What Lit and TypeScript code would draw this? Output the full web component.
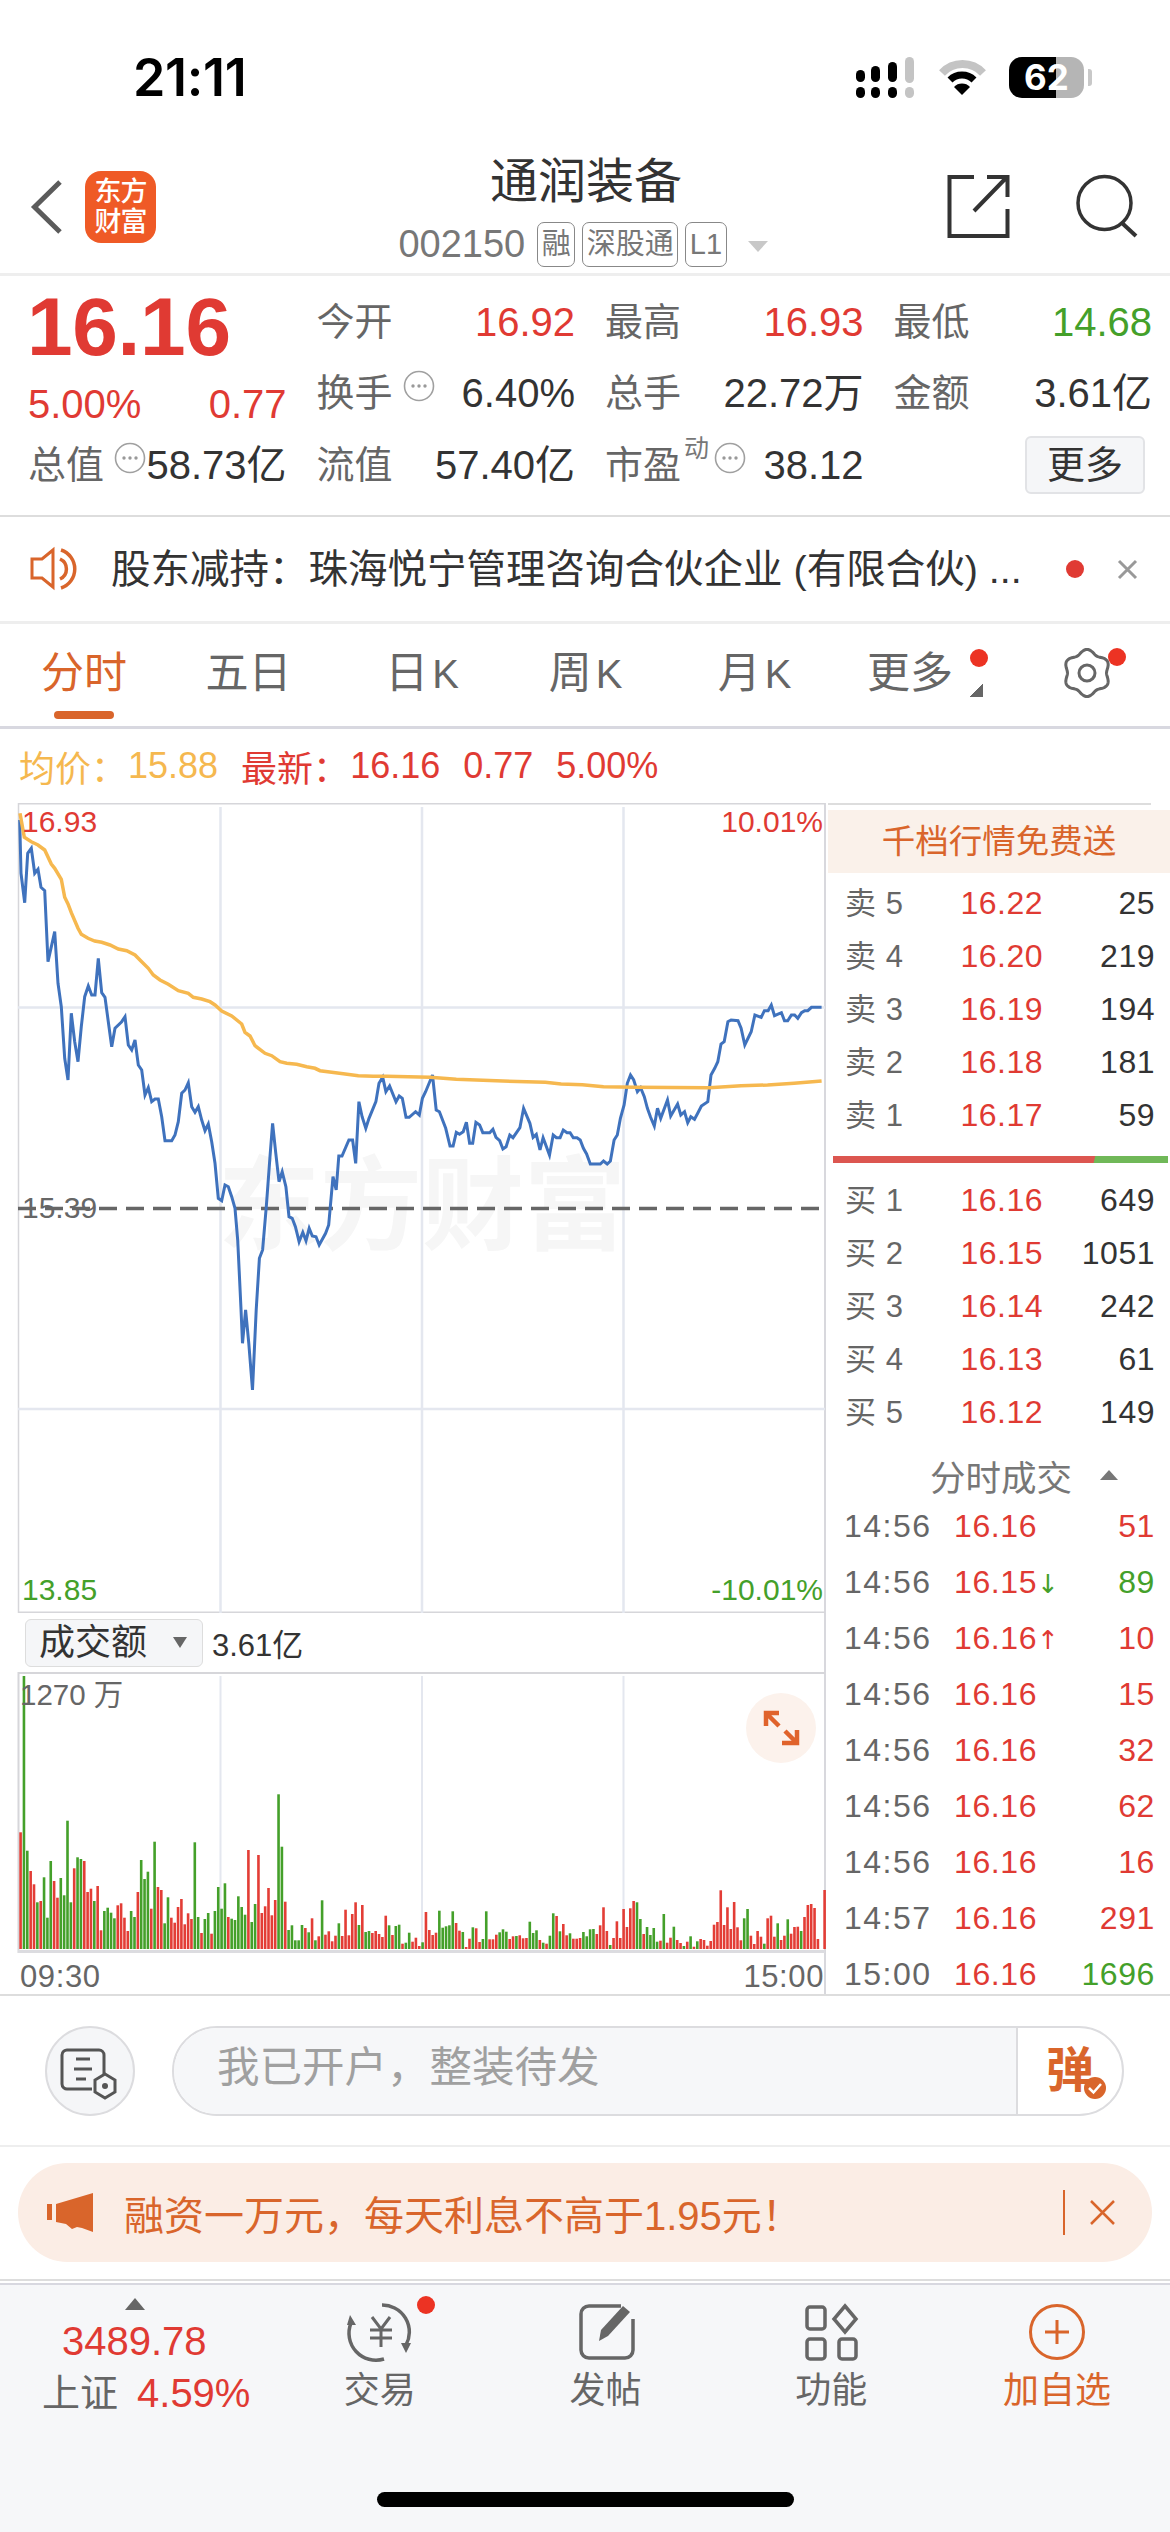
import { LitElement, html, css, svg } from "lit";
import { customElement } from "lit/decorators.js";

const VOL = "R667 G198 G722 R783 R823 G877 R873 G802 G923 G753 R813 R863 G804 G856 G632 G877 R775 G742 G747 R753 R846 R836 G873 R828 R961 G903 G893 G908 G925 R886 R880 R923 R963 G903 G921 R846 G750 G807 G785 R896 G695 R831 R840 G940 G862 R923 R938 R891 R867 R943 R910 R927 G697 G921 R969 G927 G909 R971 G903 G831 G896 G820 R921 G926 G930 G859 G891 G914 R720 G936 G882 R735 R909 R889 R834 R916 R870 G553 G710 R875 G960 G946 G991 G991 G945 R954 G967 R925 G991 R979 G871 R974 R964 R994 R977 G940 R978 R899 R976 R912 R877 G945 R885 G966 G963 R969 R963 R972 R981 R917 G946 R975 G948 G944 R1001 G998 G968 R995 R983 R1008 G997 R906 R960 R975 R968 G902 G953 G949 G946 G904 R939 R962 G966 R1011 R986 G952 R955 R996 G987 G904 R988 R988 R974 G967 G958 G965 R987 R979 G978 R976 R985 R984 G935 G969 G961 R990 G998 R1001 G977 G910 R918 G964 R942 R976 G970 R986 R986 R984 G966 G979 G958 G957 R972 R946 R892 R963 G1005 R984 R934 R984 R897 R951 R895 R873 G877 G927 R972 G951 G975 G954 G995 R992 G912 R998 R983 G950 R990 R999 G1008 R995 G979 R1010 G994 R987 R990 R1007 R993 R944 R936 R841 R945 R892 R957 R876 R952 R991 G925 G897 R977 R1002 R963 R980 G1001 R925 R917 R980 G940 R990 R977 G928 R971 R951 R950 G963 R921 R885 R882 R894 R987 R1017 R840".split(" ");

const B1 = [29,60,33,220,44,308,53,160,64,145,74,220,84,208,93,262,104,272,114,485,134,395,144,550,154,620,164,775,174,840,184,640,194,725,204,785,214,680,224,590,235,558,245,585,255,585,265,475,275,578,285,592,295,665,305,740,315,685,335,665,345,650,355,735,365,750,375,720,385,795,395,810,405,885,415,863,425,905,435,897,445,897,455,950,465,1022,485,1022,495,1005,505,965,515,880,525,870,535,848,545,920,555,937,565,920,575,960,585,992,595,972,605,1025,615,1090,625,1195,635,1202,645,1155,655,1160,665,1190,675,1225];
const B2 = [449,720,455,920,458,1030,464,930,470,1030,477,1170,484,930,490,775,496,750,503,620,510,470,515,370,521,460,527,545,533,515,540,560,546,650,552,655,558,680,565,725,572,697,578,722,584,685,590,708,597,710,603,735,615,700,621,675,629,530,635,570,640,468,646,468,659,420,666,420,672,490,678,305,684,350,691,385,697,355,710,305,716,250,723,232,729,275,736,258,748,305,754,288,760,295,767,352,773,352,785,335,792,345,798,295,804,275,817,225,824,330,830,335,842,385,850,438,856,438,862,397,868,403,875,395,881,367,887,430,893,430,899,367,906,375,912,398,925,398,931,388,937,412,944,422,950,447,956,440,963,405,969,413,982,383,989,325,1001,370,1007,412,1013,403,1020,450,1026,413,1038,465,1045,405,1051,413,1058,413,1064,390,1071,398,1077,398,1083,413,1090,413,1096,420,1102,445,1108,462,1115,492,1134,492,1140,483,1147,492,1153,483,1160,420,1166,405,1172,355,1179,315,1185,250,1191,225,1197,240,1204,275,1210,263,1217,290,1223,325,1229,352,1236,378,1242,325,1248,355,1261,300,1267,348,1280,312,1286,345,1293,335,1299,368,1305,350,1312,358,1318,340,1325,318,1337,305,1343,225,1350,205,1356,185,1362,132,1368,125,1375,65,1381,60,1394,62,1400,85,1407,135,1419,95,1426,45,1438,52,1444,32,1451,32,1457,15,1463,47,1476,38,1482,62,1488,62,1495,45,1501,45,1507,55,1514,38,1520,32,1526,32,1533,22,1552,22];
const Y1 = [30,40,43,112,64,125,84,135,104,150,124,192,134,205,154,238,164,292,174,312,184,338,204,385,214,403,234,415,254,423,275,427,300,435,325,447,350,452,375,465,395,485,415,505,430,525,450,540,475,553,505,572,535,580,550,592,575,597,600,605,615,615,635,633,665,648,695,672,705,697,720,708,735,737,765,760,785,767,810,785,830,790,860,793,890,800,915,805,930,812,965,817,1000,821,1045,827,1090,829,1130,829,1260,832];
const Y2 = [862,238,950,243,1030,247,1060,252,1100,254,1140,260,1200,262,1340,263,1400,257,1450,255,1500,250,1552,243];

function pts(a: number[], fx: (n: number) => number, fy: (n: number) => number) {
  const out: string[] = [];
  for (let i = 0; i < a.length; i += 2) out.push(`${fx(a[i]).toFixed(1)},${fy(a[i + 1]).toFixed(1)}`);
  return out.join(" ");
}
const z7x = (n: number) => 10 + n / 3, z7y = (n: number) => 800 + n / 3;
const z3x = (n: number) => n / 1.889, z3y = (n: number) => 1000 + n / 3;
const BLUE = pts(B1, z7x, z7y) + " " + pts(B2, z3x, z3y);
const GOLD = pts(Y1, z7x, z7y) + " " + pts(Y2, z3x, z3y);

function gearPath(cx: number, cy: number) {
  const p: string[] = [];
  for (let i = 0; i <= 120; i++) {
    const t = (i / 120) * Math.PI * 2;
    const r = 21.5 + 2 * Math.cos(6 * t + Math.PI);
    p.push(`${(cx + r * Math.cos(t)).toFixed(1)} ${(cy + r * Math.sin(t)).toFixed(1)}`);
  }
  return "M" + p.join("L") + "Z";
}

const SELL = [["5","16.22","25"],["4","16.20","219"],["3","16.19","194"],["2","16.18","181"],["1","16.17","59"]];
const BUY = [["1","16.16","649"],["2","16.15","1051"],["3","16.14","242"],["4","16.13","61"],["5","16.12","149"]];
const TRADES: [string,string,string,string,string][] = [
  ["14:56","16.16","","51","r"],["14:56","16.15","d","89","g"],["14:56","16.16","u","10","r"],
  ["14:56","16.16","","15","r"],["14:56","16.16","","32","r"],["14:56","16.16","","62","r"],
  ["14:56","16.16","","16","r"],["14:57","16.16","","291","r"],["15:00","16.16","","1696","g"],
];

const dots = html`<svg class="dots" viewBox="0 0 32 32"><circle cx="16" cy="16" r="14.5" fill="none" stroke="#a0a0a0" stroke-width="1.6"/><circle cx="10" cy="16" r="1.7" fill="#999"/><circle cx="16" cy="16" r="1.7" fill="#999"/><circle cx="22" cy="16" r="1.7" fill="#999"/></svg>`;

@customElement("app-root")
export class AppRoot extends LitElement {
  static styles = css`
    :host { display:block; width:1170px; height:2532px; background:#fff; overflow:hidden; font-family:"Liberation Sans","Noto Sans CJK SC",sans-serif; color:#333; }
    * { box-sizing:border-box; }
    svg { display:block; overflow:visible; }
    .r { color:#e03a33; } .g { color:#44a02a; } .k { color:#333; } .l { color:#666; }

    .status { height:140px; display:flex; justify-content:space-between; align-items:flex-start; padding:0 78px 0 133px; }
    .time { font:600 52px/50px Inter,sans-serif; color:#000; margin-top:53px; letter-spacing:-.3px; }
    .sbar { display:flex; align-items:flex-start; margin-top:57px; }
    .wifi { margin-left:22px; }
    .batt { width:75px; height:41px; border-radius:13px; margin-left:21px; background:linear-gradient(90deg,#000 0 47px,#b5b5b5 47px); color:#fff; font:700 35px/41px Inter,sans-serif; text-align:center; }
    .nub { width:4px; height:17px; margin:12px 0 0 4px; background:#c8c8c8; border-radius:0 3px 3px 0; }

    .nav { height:136px; border-bottom:3px solid #eee; display:grid; grid-template-columns:1fr auto 1fr; align-items:center; padding:0 31px 0 33px; }
    .nl { display:flex; align-items:center; gap:24px; }
    .logo { width:71px; height:72px; border-radius:16px; background:#ef5a26; color:#fff; font-weight:500; font-size:27px; line-height:30px; text-align:center; padding-top:6px; letter-spacing:-1px; }
    .nc { display:flex; flex-direction:column; align-items:center; }
    .title { font-size:48px; line-height:60px; color:#333; margin-top:6px; }
    .sub { display:flex; align-items:center; height:45px; margin-top:10px; padding-right:6px; gap:7px; color:#777; }
    .code { font-size:38px; margin-right:5px; }
    .tag { font-size:29px; height:45px; line-height:42px; border:1.5px solid #888; border-radius:7px; padding:0 3.5px; color:#777; }
    .tri { width:0; height:0; border-left:10px solid transparent; border-right:10px solid transparent; border-top:11px solid #c8c8c8; margin:4px 0 0 14px; }
    .nr { display:flex; justify-content:flex-end; gap:66px; }

    .quote { height:241px; border-bottom:2px solid #ddd; padding:10px 18px 0 28px; display:grid; grid-template-columns:repeat(4,258.5px); column-gap:30px; grid-auto-rows:71.5px; font-size:40px; }
    .left { grid-row:1 / 3; }
    .big { font-size:82px; line-height:82px; font-weight:700; color:#e03a33; margin-left:-1px; letter-spacing:-.3px; }
    .pct { display:flex; justify-content:space-between; line-height:49px; margin-top:12px; color:#e03a33; }
    .stat { display:flex; align-items:center; line-height:50px; white-space:nowrap; }
    .lab { font-size:38px; color:#666; }
    .val { margin-left:auto; }
    .dots { width:32px; height:32px; margin:-14px 0 0 10px; flex:none; }
    .sup { font-size:25px; color:#777; margin:-34px 0 0 3px; line-height:30px; }
    .sup + .dots { margin-left:5px; }
    .btn { margin-left:auto; margin-right:7px; width:120px; height:58px; background:#f5f6f8; border:2px solid #e2e3e6; border-radius:6px; font-size:38px; line-height:54px; text-align:center; }

    .notice { height:107px; border-bottom:3px solid #eee; display:flex; align-items:center; padding-left:30px; font-size:39.5px; color:#333; white-space:nowrap; }
    .notice .txt { margin:-8px 0 0 31px; }
    .nd { width:18px; height:18px; border-radius:50%; background:#e03a33; margin-left:auto; }
    .nx { margin:0 33px 0 34px; }

    .tabs { height:105px; border-bottom:3px solid #d8d8e0; display:grid; grid-template-columns:168px 161px 186px 141px 197px 114px 1fr; align-items:center; font-size:43px; color:#666; padding-bottom:4px; }
    .tab { position:relative; text-align:center; white-space:nowrap; line-height:60px; }
    .tab.on { color:#d9652b; }
    .tab.on::after { content:""; position:absolute; left:54px; top:68px; width:60px; height:8px; border-radius:4px; background:#d9652b; }
    .k-gap { margin-left:4px; font-size:40px; }
    .badge { position:absolute; width:18px; height:18px; border-radius:50%; background:#ec3323; }
    .more-dot { left:117px; top:6px; }
    .gear-dot { left:45px; top:-1px; }
    .corner { position:absolute; left:117px; top:41px; width:13px; height:13px; background:linear-gradient(135deg,transparent 50%,#666 50%); }
    .gear { position:relative; margin-left:96px; width:48px; height:48px; }

    .info { height:74px; display:flex; align-items:center; padding-left:19px; font-size:36px; gap:23px; }
    .o { color:#f5b84f; }
    .info .pre { margin-right:-22px; }

    .main { height:1193px; display:flex; border-bottom:2px solid #ddd; }
    .lc { margin-left:18px; width:808px; border-right:2px solid #d8d8dd; flex:none; }
    .chart { position:relative; height:810px; }
    .chart svg, .vol svg { position:relative; z-index:1; }
    .wm { position:absolute; left:200px; top:352px; font-size:102px; line-height:104px; font-weight:700; color:#f6f6f6; white-space:nowrap; }
    .lb { position:absolute; font-size:30px; line-height:30px; z-index:2; white-space:nowrap; }
    .lb.a { left:4px; } .lb.b { right:1px; }
    .t4 { top:4px; } .t390 { top:390px; } .t772 { top:772px; }
    .lb.vl { left:2px; top:8px; font-size:29.5px; }
    .vh { height:59px; display:flex; align-items:center; padding-left:7px; }
    .dd { width:178px; height:48px; background:#f5f6f8; border:1.5px solid #ddd; border-radius:6px; font-size:36px; line-height:44px; padding-left:13px; display:flex; align-items:center; color:#333; }
    .dd i { width:0; height:0; border-left:7px solid transparent; border-right:7px solid transparent; border-top:11px solid #666; margin-left:26px; }
    .vt { font-size:31px; margin-left:9px; color:#333; }
    .vol { position:relative; height:281px; }
    .ex { position:absolute; left:728px; top:21px; z-index:2; }
    .axis { display:flex; justify-content:space-between; font-size:31px; color:#666; padding:6px 0 0 2px; line-height:36px; letter-spacing:.6px; }

    .panel { width:342px; margin-left:2px; overflow:hidden; font-size:32px; }
    .rule { width:323px; height:1.5px; background:#ddd; }
    .ph { margin-top:5.5px; height:63px; background:#faf1ea; color:#d9652b; font-size:33.5px; line-height:63px; text-align:center; }
    .rows { margin-top:3.5px; }
    .ob { height:53px; display:grid; grid-template-columns:90px 108px 112px; padding-left:17px; align-items:center; line-height:53px; letter-spacing:.5px; }
    .ob .n { font-size:31px; color:#666; white-space:pre; }
    .ob b, .tr b { font-weight:400; text-align:right; }
    .split { height:7px; margin:14.5px 2px 10.5px 5px; background:linear-gradient(104deg,#dc5650 0 254px,#70b858 255px); }
    .th { height:59.5px; padding-top:14px; display:flex; align-items:center; font-size:35.5px; color:#777; padding-left:102px; }
    .th i { width:0; height:0; border-left:9px solid transparent; border-right:9px solid transparent; border-bottom:10px solid #777; margin-left:28px; }
    .tr { height:56px; display:grid; grid-template-columns:110px 112px 89px; padding-left:16px; align-items:center; line-height:56px; letter-spacing:.6px; }
    .tr .l { letter-spacing:1.5px; }
    .ar { font:26px "DejaVu Sans",sans-serif; letter-spacing:0; }

    .inp { height:151px; border-bottom:2px solid #eee; display:flex; align-items:center; padding-left:45px; }
    .rnd { width:90px; height:90px; border-radius:50%; background:#f5f6f8; border:2px solid #dcdcdf; flex:none; }
    .box { margin-left:37px; width:952px; height:90px; border:2px solid #dcdcdf; border-radius:45px; display:flex; overflow:hidden; }
    .ph2 { flex:1; background:#f6f7f9; border-right:2px solid #dcdcdf; font-size:42.5px; line-height:80px; color:#a0a0a0; padding-left:43px; white-space:nowrap; }
    .tan { width:104px; position:relative; color:#d9652b; font-size:48px; font-weight:700; line-height:86px; padding-left:28px; }
    .tan svg { position:absolute; left:65px; top:48px; }

    .pro { height:134px; border-bottom:2px solid #ddd; padding:16px 18px 0; }
    .ban { height:99px; border-radius:50px; background:#fbede5; display:flex; align-items:center; color:#d9652b; font-size:40px; padding-left:29px; white-space:nowrap; }
    .ban .t { margin-left:30px; }
    .ban .sep { margin-left:auto; width:2px; height:45px; background:#d9652b; }
    .ban .x { margin:0 37px 0 25px; }

    .bar { margin-top:2px; height:249px; background:#f6f7f9; border-top:2px solid #d8d8e0; display:flex; flex-direction:column; }
    .tb { height:207px; display:grid; grid-template-columns:233px repeat(4,225.75px); padding-left:34px; }
    .idx { display:flex; flex-direction:column; align-items:flex-start; font-size:40px; }
    .idx i { width:0; height:0; margin:13px 0 6px 91px; border-left:10px solid transparent; border-right:10px solid transparent; border-bottom:12px solid #666; }
    .idx .num { line-height:50px; margin-left:28px; color:#e03a33; }
    .idx .row { line-height:50px; margin:2px 0 0 8px; display:flex; gap:19px; white-space:nowrap; }
    .idx .nm { font-size:38px; color:#666; }
    .it { display:flex; flex-direction:column; align-items:center; padding-top:12px; font-size:36px; line-height:56px; color:#666; }
    .it.hl { color:#d9652b; }
    .home { width:417px; height:15px; border-radius:8px; background:#000; margin-left:377px; }
  `;

  private ob(r: string[], t: string) {
    return html`<div class="ob"><span class="n">${t} ${r[0]}</span><b class="r">${r[1]}</b><b class="k">${r[2]}</b></div>`;
  }

  render() {
    return html`
      <div class="status">
        <div class="time">21:11</div>
        <div class="sbar">
          <svg width="60" height="41" viewBox="855 57 60 41">
            <g fill="#000">
              <rect x="855" y="70" width="9" height="12" rx="4.5"/><rect x="855" y="87" width="9" height="11" rx="4.5"/>
              <rect x="870" y="66" width="9" height="16" rx="4.5"/><rect x="870" y="87" width="9" height="11" rx="4.5"/>
              <rect x="887" y="62" width="9" height="20" rx="4.5"/><rect x="887" y="87" width="9" height="11" rx="4.5"/>
            </g>
            <g fill="#c4c4c4"><rect x="904" y="57" width="9" height="26" rx="4.5"/><rect x="904" y="87" width="9" height="11" rx="4.5"/></g>
          </svg>
          <svg class="wifi" width="50" height="38" viewBox="937 60 50 38">
            <path d="M941 76 A28 28 0 0 1 982 76" fill="none" stroke="#c4c4c4" stroke-width="8"/>
            <path d="M949 83 A17 17 0 0 1 973 83" fill="none" stroke="#000" stroke-width="7"/>
            <path d="M953 90 A11 11 0 0 1 969 90 L961 98 Z" fill="#000"/>
          </svg>
          <div class="batt">62</div><div class="nub"></div>
        </div>
      </div>

      <div class="nav">
        <div class="nl">
          <svg width="28" height="52" viewBox="33 181 28 52"><path d="M60 182 L34.500 207 L60 232" fill="none" stroke="#5b5b5b" stroke-width="5"/></svg>
          <div class="logo">东方<br>财富</div>
        </div>
        <div class="nc">
          <div class="title">通润装备</div>
          <div class="sub"><span class="code">002150</span><span class="tag">融</span><span class="tag">深股通</span><span class="tag">L1</span><i class="tri"></i></div>
        </div>
        <div class="nr">
          <svg width="63" height="63" viewBox="945 175 63 63"><path d="M972 177 H947.500 V236 H1005.500 V209 M972 211 L1004 178 M985 177 H1005.500 V197" fill="none" stroke="#333" stroke-width="4"/></svg>
          <svg width="63" height="63" viewBox="1074 175 63 63"><circle cx="1102.500" cy="203" r="26.500" fill="none" stroke="#333" stroke-width="3.500"/><path d="M1120 223 L1134 236" stroke="#333" stroke-width="4"/></svg>
        </div>
      </div>

      <div class="quote">
        <div class="left"><div class="big">16.16</div><div class="pct"><span>5.00%</span><span>0.77</span></div></div>
        <div class="stat"><span class="lab">今开</span><span class="val r">16.92</span></div>
        <div class="stat"><span class="lab">最高</span><span class="val r">16.93</span></div>
        <div class="stat"><span class="lab">最低</span><span class="val g">14.68</span></div>
        <div class="stat"><span class="lab">换手</span>${dots}<span class="val k">6.40%</span></div>
        <div class="stat"><span class="lab">总手</span><span class="val k">22.72万</span></div>
        <div class="stat"><span class="lab">金额</span><span class="val k">3.61亿</span></div>
        <div class="stat"><span class="lab">总值</span>${dots}<span class="val k">58.73亿</span></div>
        <div class="stat"><span class="lab">流值</span><span class="val k">57.40亿</span></div>
        <div class="stat"><span class="lab">市盈</span><span class="sup">动</span>${dots}<span class="val k">38.12</span></div>
        <div class="stat"><div class="btn">更多</div></div>
      </div>

      <div class="notice">
        <svg width="50" height="42" viewBox="30 548 50 42"><path d="M32 559 H42 L53 550 V587 L42 578 H32 Z" fill="none" stroke="#d9652b" stroke-width="3"/><path d="M60 559 A11 11 0 0 1 60 579 M61 550 A20 20 0 0 1 61 588" fill="none" stroke="#d9652b" stroke-width="3.500"/></svg>
        <span class="txt">股东减持：珠海悦宁管理咨询合伙企业 (有限合伙) ...</span>
        <span class="nd"></span>
        <svg class="nx" width="19" height="19" viewBox="0 0 19 19"><path d="M1 1 L18 18 M18 1 L1 18" stroke="#999" stroke-width="3"/></svg>
      </div>

      <div class="tabs">
        <div class="tab on">分时</div>
        <div class="tab">五日</div>
        <div class="tab">日<span class="k-gap">K</span></div>
        <div class="tab">周<span class="k-gap">K</span></div>
        <div class="tab">月<span class="k-gap">K</span></div>
        <div class="tab">更多<span class="badge more-dot"></span><span class="corner"></span></div>
        <div class="gear">
          <svg width="48" height="48" viewBox="0 0 48 48"><path d="${gearPath(24, 24)}" fill="none" stroke="#666" stroke-width="3"/><circle cx="24" cy="24" r="8" fill="none" stroke="#666" stroke-width="3"/></svg>
          <span class="badge gear-dot"></span>
        </div>
      </div>

      <div class="info">
        <span class="o pre">均价：</span><span class="o">15.88</span>
        <span class="r pre">最新：</span><span class="r">16.16</span><span class="r">0.77</span><span class="r">5.00%</span>
      </div>

      <div class="main">
        <div class="lc">
          <div class="chart">
            <div class="wm">东方财富</div>
            <svg width="807" height="810" viewBox="18 803 807 810">
              <path d="M18.500 803 V1613 M18 803.700 H825 M18 1612.300 H825" fill="none" stroke="#d6d6da" stroke-width="1.500"/>
              <path d="M220.500 807 V1613 M422 807 V1613 M623.500 807 V1613 M18 1007.500 H825 M18 1409 H825" fill="none" stroke="#e4e7ef" stroke-width="2.500"/>
              <path d="M18 1208.500 H822" stroke="#666" stroke-width="3.500" stroke-dasharray="18 9"/>
              <polyline points="${BLUE}" fill="none" stroke="#3f72bd" stroke-width="3" stroke-linejoin="miter"/>
              <polyline points="${GOLD}" fill="none" stroke="#f6b84f" stroke-width="3.500"/>
            </svg>
            <span class="lb a r t4">16.93</span>
            <span class="lb b r t4">10.01%</span>
            <span class="lb a l t390">15.39</span>
            <span class="lb a g t772">13.85</span>
            <span class="lb b g t772">-10.01%</span>
          </div>
          <div class="vh"><div class="dd">成交额<i></i></div><span class="vt">3.61亿</span></div>
          <div class="vol">
            <svg width="807" height="281" viewBox="18 1672 807 281">
              <path d="M18.500 1672 V1953 M18 1673 H825" fill="none" stroke="#d6d6da" stroke-width="2"/>
              <path d="M18 1951.500 H825" stroke="#dcdce0" stroke-width="3"/>
              <path d="M220.500 1676 V1949 M422 1676 V1949 M623.500 1676 V1949" fill="none" stroke="#e4e7ef" stroke-width="2"/>
              ${VOL.map((v, i) => {
                const top = parseInt(v.slice(1));
                const y = 1610 + top / 3;
                return svg`<rect x="${(19.3 + i * 3.35).toFixed(2)}" y="${y.toFixed(1)}" width="2.6" height="${(1949 - y).toFixed(1)}" fill="${v[0] === "R" ? "#e33d36" : "#44a02a"}"/>`;
              })}
            </svg>
            <span class="lb vl l">1270 万</span>
            <div class="ex"><svg width="70" height="70" viewBox="0 0 70 70"><circle cx="35" cy="35" r="35" fill="#fcf2ec"/><path d="M20 33 V20 H33 M20 20 L33 33 M51 37 V50 H36 M51 50 L39 38" fill="none" stroke="#e0632b" stroke-width="4.500"/></svg></div>
          </div>
          <div class="axis"><span>09:30</span><span>15:00</span></div>
        </div>

        <div class="panel">
          <div class="rule"></div>
          <div class="ph">千档行情免费送</div>
          <div class="rows">${SELL.map(r => this.ob(r, "卖"))}</div>
          <div class="split"></div>
          <div>${BUY.map(r => this.ob(r, "买"))}</div>
          <div class="th">分时成交<i></i></div>
          ${TRADES.map(t => html`<div class="tr"><span class="l">${t[0]}</span><span class="r">${t[1]}${t[2] === "d" ? html`<span class="ar g">↓</span>` : t[2] === "u" ? html`<span class="ar r">↑</span>` : ""}</span><b class="${t[4]}">${t[3]}</b></div>`)}
        </div>
      </div>

      <div class="inp">
        <div class="rnd">
          <svg width="86" height="86" viewBox="47 2027 86 86">
            <path d="M108 2074 V2054 A5 5 0 0 0 103 2049 H72 A5 5 0 0 0 66 2054 V2083 A5 5 0 0 0 72 2088 H96 M80 2058 H94 M78 2068 H96 M80 2078 H90" fill="none" stroke="#555" stroke-width="3" transform="translate(-4 0)"/>
            <path d="M105 2073 L115 2079 V2091 L105 2097 L95 2091 V2079 Z" fill="#f5f6f8" stroke="#555" stroke-width="3"/>
            <circle cx="105" cy="2085" r="3" fill="#555"/>
          </svg>
        </div>
        <div class="box">
          <div class="ph2">我已开户，整装待发</div>
          <div class="tan">弹<svg width="24" height="24" viewBox="0 0 24 24"><circle cx="12" cy="12" r="11" fill="#d9652b"/><path d="M6 12 L10.500 16.500 L18 8" fill="none" stroke="#fff" stroke-width="2.500"/></svg></div>
        </div>
      </div>

      <div class="pro">
        <div class="ban">
          <svg width="47" height="40" viewBox="47 2193 47 40"><path d="M47 2204 h5 v16 h-5 Z M56 2204 L93 2193 V2232 L82 2228 L77 2227 L72 2229 L66 2224 L56 2222 Z" fill="#d9652b"/></svg>
          <span class="t">融资一万元，每天利息不高于1.95元！</span>
          <span class="sep"></span>
          <svg class="x" width="25" height="25" viewBox="0 0 25 25"><path d="M1 1 L24 24 M24 1 L1 24" stroke="#d9652b" stroke-width="2.500"/></svg>
        </div>
      </div>

      <div class="bar">
        <div class="tb">
          <div class="idx">
            <i></i>
            <span class="num">3489.78</span>
            <span class="row"><span class="nm">上证</span><span class="r">4.59%</span></span>
          </div>
          <div class="it">
            <svg width="100" height="66" viewBox="332 2296 100 66">
              <path d="M384 2304 A27 27 0 0 1 408 2344 M386 2358 A27 27 0 0 1 353 2322" fill="none" stroke="#666" stroke-width="3.500"/>
              <path d="M403 2342 L413 2342 L408 2352 Z M349 2324 L358 2324 L352 2314 Z" fill="#666"/>
              <path d="M374 2316 L383 2328 L392 2316 M372 2329 H394 M372 2337 H394 M383 2328 V2346" fill="none" stroke="#666" stroke-width="3"/>
              <circle cx="428" cy="2304" r="9" fill="#ec3323"/>
            </svg>
            交易
          </div>
          <div class="it">
            <svg width="100" height="66" viewBox="557 2296 100 66">
              <path d="M622 2305 H590 A8 8 0 0 0 582 2313 V2349 A8 8 0 0 0 590 2357 H626 A8 8 0 0 0 634 2349 V2318" fill="none" stroke="#666" stroke-width="3.500"/>
              <path d="M600 2340 L602 2329 L624 2305 L631 2311 L609 2335 Z" fill="#666"/>
            </svg>
            发帖
          </div>
          <div class="it">
            <svg width="100" height="66" viewBox="783 2296 100 66">
              <g fill="none" stroke="#666" stroke-width="3.500">
                <rect x="809" y="2306" width="18" height="22" rx="3"/>
                <path d="M847 2305 L858 2318 L847 2331 L836 2318 Z"/>
                <rect x="809" y="2338" width="18" height="20" rx="3"/>
                <rect x="841" y="2338" width="17" height="20" rx="3"/>
              </g>
            </svg>
            功能
          </div>
          <div class="it hl">
            <svg width="100" height="66" viewBox="1008 2296 100 66">
              <circle cx="1058" cy="2331" r="26.500" fill="none" stroke="#d9652b" stroke-width="3"/>
              <path d="M1058 2319 V2343 M1046 2331 H1070" stroke="#d9652b" stroke-width="3"/>
            </svg>
            加自选
          </div>
        </div>
        <div class="home"></div>
      </div>
    `;
  }
}
